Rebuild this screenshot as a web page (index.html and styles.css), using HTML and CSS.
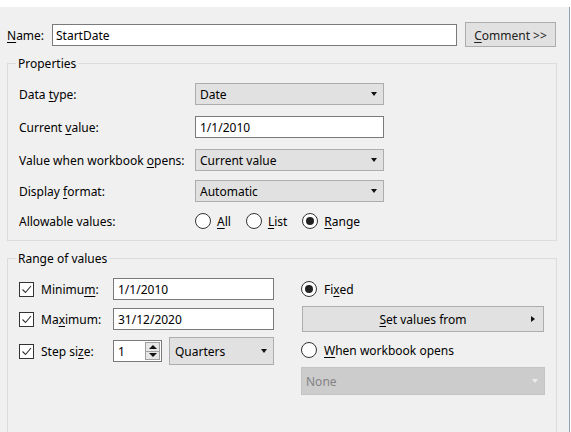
FILE: index.html
```html
<!DOCTYPE html>
<html>
<head>
<meta charset="utf-8">
<title>Edit Parameter</title>
<link rel="stylesheet" href="styles.css">
</head>
<body>
<div class="topbar"></div>
<div class="dialog">
  <div class="name-row">
    <span class="name-label"><u>N</u>ame:</span>
    <div class="textbox name-input">StartDate</div>
    <div class="btn comment-btn"><u>C</u>omment &gt;&gt;</div>
  </div>

  <fieldset class="group props">
    <legend>Properties</legend>
    <div class="prow r1">
      <span class="plabel">Data <u>t</u>ype:</span>
      <div class="combo pctl"><span class="ctext">Date</span><span class="caret"></span></div>
    </div>
    <div class="prow r2">
      <span class="plabel">Current <u>v</u>alue:</span>
      <div class="textbox pctl">1/1/2010</div>
    </div>
    <div class="prow r3">
      <span class="plabel">Value when workbook <u>o</u>pens:</span>
      <div class="combo pctl"><span class="ctext">Current value</span><span class="caret"></span></div>
    </div>
    <div class="prow r4">
      <span class="plabel">Display <u>f</u>ormat:</span>
      <div class="combo pctl"><span class="ctext">Automatic</span><span class="caret"></span></div>
    </div>
    <div class="prow r5">
      <span class="plabel">Allowable values:</span>
      <div class="radios">
        <span class="radio"></span><span class="rlabel"><u>A</u>ll</span>
        <span class="radio"></span><span class="rlabel"><u>L</u>ist</span>
        <span class="radio checked"></span><span class="rlabel"><u>R</u>ange</span>
      </div>
    </div>
  </fieldset>

  <fieldset class="group range">
    <legend>Range of values</legend>
    <div class="range-body">
      <div class="rcol-left">
        <div class="rrow first">
          <span class="check"><svg width="13" height="13" viewBox="0 0 13 13"><polyline points="2.5,6.5 5.5,9.5 11,3" fill="none" stroke="#333" stroke-width="1.1"/></svg></span>
          <span class="clabel">Minimu<u>m</u>:</span>
          <div class="textbox rinput">1/1/2010</div>
        </div>
        <div class="rrow second">
          <span class="check"><svg width="13" height="13" viewBox="0 0 13 13"><polyline points="2.5,6.5 5.5,9.5 11,3" fill="none" stroke="#333" stroke-width="1.1"/></svg></span>
          <span class="clabel">Ma<u>x</u>imum:</span>
          <div class="textbox rinput">31/12/2020</div>
        </div>
        <div class="rrow third">
          <span class="check"><svg width="13" height="13" viewBox="0 0 13 13"><polyline points="2.5,6.5 5.5,9.5 11,3" fill="none" stroke="#333" stroke-width="1.1"/></svg></span>
          <span class="clabel">Step si<u>z</u>e:</span>
          <div class="textbox spinbox">
            <span class="spin-text">1</span>
            <span class="spin">
              <span class="spin-up"></span>
              <span class="spin-down"></span>
            </span>
          </div>
          <div class="combo quarters"><span class="ctext">Quarters</span><span class="caret"></span></div>
        </div>
      </div>
      <div class="rcol-right">
        <div class="opt-row first">
          <span class="radio checked"></span><span class="rlabel">Fi<u>x</u>ed</span>
        </div>
        <div class="btn set-btn"><span class="set-text"><u>S</u>et values from</span><span class="rcaret"></span></div>
        <div class="opt-row when">
          <span class="radio"></span><span class="rlabel"><u>W</u>hen workbook opens</span>
        </div>
        <div class="combo disabled none-combo"><span class="ctext">None</span><span class="caret"></span></div>
      </div>
    </div>
  </fieldset>
</div>
</body>
</html>
```

FILE: styles.css
```css
* { box-sizing: border-box; }
html, body { margin: 0; padding: 0; }
body {
  background: #ffffff;
  font-family: "Noto Sans", "Open Sans", sans-serif;
  font-size: 12px;
  line-height: 16px;
  color: #000;
  width: 571px;
  height: 432px;
  overflow: hidden;
}
u { text-decoration: underline; text-underline-offset: 2px; }

.topbar { height: 7px; background: #fff; }

.dialog {
  width: 570px;
  height: 425px;
  background: #f0f0f0;
  border-right: 1px solid #8ea5b9;
  padding: 15px 0 0 7px;
  overflow: hidden;
}

/* shift text 1px lower inside centred flex rows */
.name-label, .plabel, .ctext, .clabel, .rlabel, .set-text, .spin-text, .tb-text { padding-top: 2px; }

/* name row */
.name-row { display: flex; align-items: center; height: 25px; }
.name-label { width: 45px; }
.textbox {
  background: #fff;
  border: 1px solid #7a7a7a;
  height: 22px;
  padding: 2px 0 0 4px;
  display: flex;
  align-items: center;
}
.name-input { width: 405px; margin-right: 8px; padding-left: 3px; }
.btn {
  background: #e1e1e1;
  border: 1px solid #adadad;
  display: flex;
  align-items: center;
}
.comment-btn { width: 91px; height: 25px; justify-content: center; color: #222; padding-top: 2px; }

/* group boxes */
.group {
  margin: 0;
  border: 1px solid #dcdcdc;
  width: 550px;
  padding: 0 0 9px 8px;
}
.group legend { padding: 1px 2px 0; margin: 0; line-height: 16px; }
.props { margin-top: 8px; }
.range { margin-top: 9px; height: 220px; }

/* properties rows */
.prow { display: flex; align-items: center; height: 22px; padding-left: 3px; margin-top: 11px; }
.prow.r1 { margin-top: 11px; }
.prow.r4 { margin-top: 9px; }
.prow.r5 { margin-top: 9px; height: 20px; }
.plabel { width: 176px; }
.pctl { width: 189px; }

.combo {
  background: #e1e1e1;
  border: 1px solid #adadad;
  height: 22px;
  display: flex;
  align-items: center;
  padding: 0 6px 0 4px;
}
.combo .ctext { flex: 1; }
.caret {
  width: 0; height: 0;
  border-left: 3.5px solid transparent;
  border-right: 3.5px solid transparent;
  border-top: 4px solid #111;
}

.radios { display: flex; align-items: center; }
.radio {
  width: 16px; height: 16px;
  border: 1px solid #333;
  border-radius: 50%;
  background: #fff;
  display: inline-flex;
  align-items: center;
  justify-content: center;
  flex: none;
}
.radio.checked::after {
  content: "";
  width: 8px; height: 8px;
  border-radius: 50%;
  background: #222;
}
.rlabel { margin-left: 7px; }
.radios .rlabel { margin-right: 15px; margin-left: 6px; }

/* range */
.range-body { display: flex; padding-left: 3px; }
.rcol-left { width: 255px; }
.rcol-right { width: 244px; margin-left: 27px; }

.rrow { display: flex; align-items: center; height: 22px; margin-top: 8px; }
.rrow.first { margin-top: 11px; }
.rrow.third { margin-top: 7px; height: 28px; }
.check {
  width: 15px; height: 15px;
  border: 1px solid #333;
  background: #fff;
  display: inline-flex;
  align-items: center;
  justify-content: center;
  flex: none;
}
.clabel { margin-left: 7px; width: 72px; }
.rinput { width: 161px; }

.spinbox { width: 49px; padding-top: 0; }
.spin-text { flex: 1; }
.spin {
  width: 15px; height: 18px;
  margin-right: 1px;
  border: 1px solid #a0a0a0;
  background: #e6e6e6;
  display: flex;
  flex-direction: column;
}
.spin-up, .spin-down {
  flex: 1;
  display: flex;
  align-items: center;
  justify-content: center;
}
.spin-up { border-bottom: 1px solid #a0a0a0; }
.spin-up::after {
  content: "";
  border-left: 4px solid transparent;
  border-right: 4px solid transparent;
  border-bottom: 4px solid #111;
}
.spin-down::after {
  content: "";
  border-left: 4px solid transparent;
  border-right: 4px solid transparent;
  border-top: 4px solid #111;
}
.quarters { width: 105px; height: 28px; margin-left: 7px; padding-left: 5px; }

.opt-row { display: flex; align-items: center; height: 22px; margin-top: 7px; }
.opt-row.first { margin-top: 11px; }
.set-btn { height: 26px; margin: 6px 1px 0 1px; padding-right: 8px; }
.set-text { flex: 1; text-align: center; padding-left: 12px; }
.rcaret {
  width: 0; height: 0;
  border-top: 3.5px solid transparent;
  border-bottom: 3.5px solid transparent;
  border-left: 4px solid #111;
}
.none-combo { height: 28px; margin-top: 6px; }
.combo.disabled { background: #cccccc; border-color: #c4c4c4; color: #838383; }
.combo.disabled .caret { border-top-color: #ececec; }
```
